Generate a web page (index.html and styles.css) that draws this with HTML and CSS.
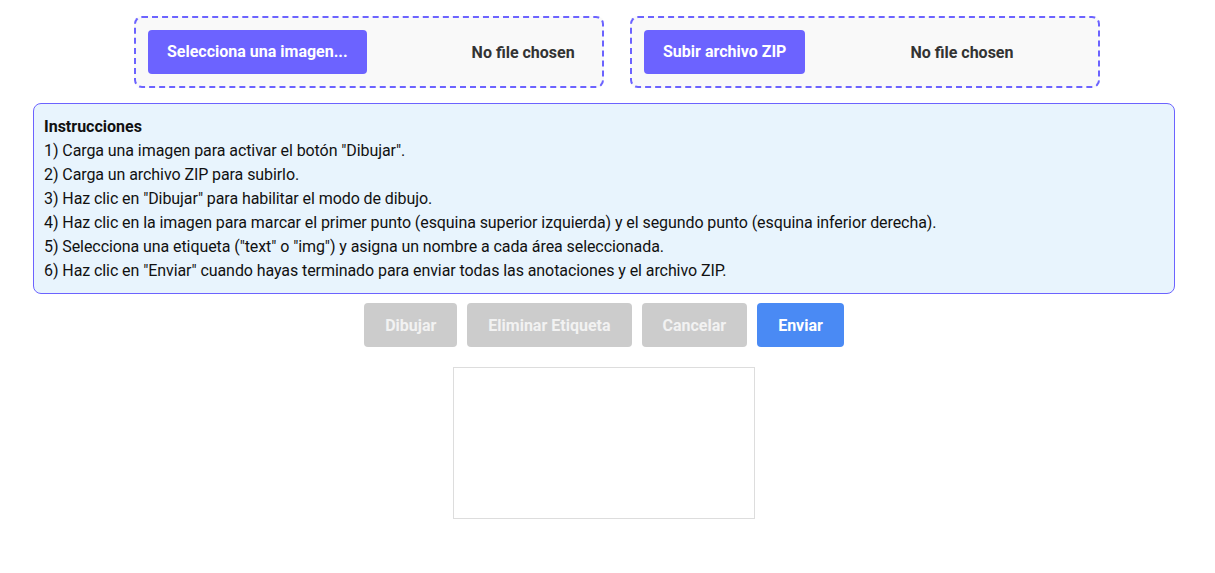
FILE: index.html
```html
<!DOCTYPE html>
<html lang="es">
<head>
<meta charset="utf-8">
<title>Anotador</title>
<link rel="stylesheet" href="styles.css">
</head>
<body>
<div class="container">
  <div class="uploads">
    <div class="upload-box">
      <span class="file-btn">Selecciona una imagen...</span>
      <span class="file-name">No file chosen</span>
    </div>
    <div class="upload-box">
      <span class="file-btn">Subir archivo ZIP</span>
      <span class="file-name">No file chosen</span>
    </div>
  </div>
  <div class="instructions">
    <div class="title">Instrucciones</div>
    <div>1) Carga una imagen para activar el botón "Dibujar".</div>
    <div>2) Carga un archivo ZIP para subirlo.</div>
    <div>3) Haz clic en "Dibujar" para habilitar el modo de dibujo.</div>
    <div>4) Haz clic en la imagen para marcar el primer punto (esquina superior izquierda) y el segundo punto (esquina inferior derecha).</div>
    <div>5) Selecciona una etiqueta ("text" o "img") y asigna un nombre a cada área seleccionada.</div>
    <div>6) Haz clic en "Enviar" cuando hayas terminado para enviar todas las anotaciones y el archivo ZIP.</div>
  </div>
  <div class="actions">
    <button class="btn btn-disabled">Dibujar</button>
    <button class="btn btn-disabled">Eliminar Etiqueta</button>
    <button class="btn btn-disabled">Cancelar</button>
    <button class="btn btn-primary">Enviar</button>
  </div>
  <div class="canvas-wrap">
    <div class="canvas"></div>
  </div>
</div>
</body>
</html>
```
FILE: styles.css
```css
html, body {
  margin: 0;
  padding: 0;
  background: #ffffff;
}
body {
  padding: 8px;
  font-family: Roboto, "Noto Sans", sans-serif;
  font-size: 16px;
  color: #000;
}
.container {
  margin: 0 32px 0 25px;
}
.uploads {
  display: flex;
  justify-content: center;
  gap: 26px;
  padding-left: 26px;
  margin-top: 8px;
}
.upload-box {
  box-sizing: border-box;
  width: 470px;
  height: 72px;
  border: 2px dashed #6c63ff;
  border-radius: 8px;
  background: #f9f9f9;
  padding: 12px;
  display: flex;
  align-items: center;
}
.file-btn {
  background: #6c63ff;
  color: #fff;
  font-weight: 700;
  font-size: 16px;
  height: 44px;
  line-height: 44px;
  padding: 0 19px;
  border-radius: 4px;
}
.file-name {
  margin-left: 105px;
  font-weight: 700;
  color: #333;
  font-size: 16px;
}
.instructions {
  margin-top: 15px;
  border: 1px solid #6c63ff;
  border-radius: 8px;
  background: #e8f4fd;
  padding: 11px 10px 10px;
  line-height: 24px;
  color: #111;
  letter-spacing: -0.08px;
}
.title {
  font-weight: 700;
  letter-spacing: 0;
}
.actions {
  display: flex;
  justify-content: center;
  gap: 10px;
  margin-top: 9px;
}
.btn {
  font-family: inherit;
  font-size: 16px;
  font-weight: 700;
  height: 44px;
  padding: 0 21px;
  border: none;
  border-radius: 4px;
  color: #fff;
}
.btn-disabled {
  background: #cccccc;
  color: #f2f2f2;
}
.btn-primary {
  background: #4a8af4;
}
.canvas-wrap {
  display: flex;
  justify-content: center;
  margin-top: 20px;
}
.canvas {
  width: 300px;
  height: 150px;
  border: 1px solid #dddddd;
}
```
